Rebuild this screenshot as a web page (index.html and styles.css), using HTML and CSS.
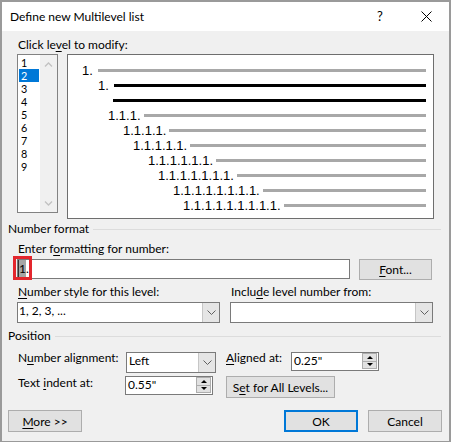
FILE: index.html
```html
<!DOCTYPE html>
<html>
<head>
<meta charset="utf-8">
<link rel="stylesheet" href="styles.css">
</head>
<body>
<div class="dialog">
  <div class="titlebar">
    <span class="title">Define new Multilevel list</span>
    <span class="cap help">?</span>
    <span class="cap close"><svg width="11" height="11" viewBox="0 0 11 11"><path d="M0.5 0.5L10.5 10.5M10.5 0.5L0.5 10.5" stroke="#000" stroke-width="1" fill="none"/></svg></span>
  </div>
  <div class="content">
    <div class="lbl click">Click le<u>v</u>el to modify:</div>
    <div class="top-row">
      <div class="listbox">
        <ul class="items">
          <li>1</li><li class="sel">2</li><li>3</li><li>4</li><li>5</li><li>6</li><li>7</li><li>8</li><li>9</li>
        </ul>
        <div class="vscroll">
          <svg width="9" height="5" viewBox="0 0 9 5"><path d="M1 4.5L4.5 1L8 4.5" stroke="#c2c2c2" stroke-width="1.3" fill="none"/></svg>
          <svg width="9" height="5" viewBox="0 0 9 5"><path d="M1 0.5L4.5 4L8 0.5" stroke="#c2c2c2" stroke-width="1.3" fill="none"/></svg>
        </div>
      </div>
      <div class="preview">
        <div class="prow l1 wide"><span class="num">1.</span><span class="bar"></span></div>
        <div class="prow l2 wide"><span class="num">1.</span><span class="bar dark"></span></div>
        <div class="prow l3"><span class="bar dark"></span></div>
        <div class="prow l4"><span class="num">1.1.1.</span><span class="bar"></span></div>
        <div class="prow l5"><span class="num">1.1.1.1.</span><span class="bar"></span></div>
        <div class="prow l6"><span class="num">1.1.1.1.1.</span><span class="bar"></span></div>
        <div class="prow l7"><span class="num">1.1.1.1.1.1.</span><span class="bar"></span></div>
        <div class="prow l8"><span class="num">1.1.1.1.1.1.1.</span><span class="bar"></span></div>
        <div class="prow l9"><span class="num">1.1.1.1.1.1.1.1.</span><span class="bar"></span></div>
        <div class="prow l10"><span class="num">1.1.1.1.1.1.1.1.1.</span><span class="bar"></span></div>
      </div>
    </div>

    <div class="ghead first"><span>Number format</span><span class="rule"></span></div>
    <div class="fblock">
      <div class="lbl enter">Enter f<u>o</u>rmatting for number:</div>
      <div class="fmt-row">
        <div class="textbox"><span class="seltext">1</span>.</div>
        <div class="btn font"><span><u>F</u>ont...</span></div>
        <div class="redbox"></div>
      </div>
      <div class="two-col">
        <div class="col">
          <div class="lbl"><u>N</u>umber style for this level:</div>
          <div class="combo wide-combo"><span class="val">1, 2, 3, ...</span><span class="arr"><svg width="9" height="5" viewBox="0 0 9 5"><path d="M0.5 0.5L4.5 4.5L8.5 0.5" stroke="#606060" stroke-width="1" fill="none"/></svg></span></div>
        </div>
        <div class="col">
          <div class="lbl">Inclu<u>d</u>e level number from:</div>
          <div class="combo wide-combo"><span class="val"></span><span class="arr"><svg width="9" height="5" viewBox="0 0 9 5"><path d="M0.5 0.5L4.5 4.5L8.5 0.5" stroke="#606060" stroke-width="1" fill="none"/></svg></span></div>
        </div>
      </div>
    </div>

    <div class="ghead second"><span>Position</span><span class="rule"></span></div>
    <div class="prow-a">
      <span class="plbl w108">N<u>u</u>mber alignment:</span>
      <div class="combo small-combo"><span class="val">Left</span><span class="arr"><svg width="9" height="5" viewBox="0 0 9 5"><path d="M0.5 0.5L4.5 4.5L8.5 0.5" stroke="#606060" stroke-width="1" fill="none"/></svg></span></div>
      <span class="plbl aligned"><u>A</u>ligned at:</span>
      <div class="spin"><span class="val">0.25"</span><span class="sb"><span class="half"><span class="tri up"></span></span><span class="half"><span class="tri down"></span></span></span></div>
    </div>
    <div class="prow-b">
      <span class="plbl w107">Text <u>i</u>ndent at:</span>
      <div class="spin"><span class="val">0.55"</span><span class="sb"><span class="half"><span class="tri up"></span></span><span class="half"><span class="tri down"></span></span></span></div>
      <div class="btn setall"><span>S<u>e</u>t for All Levels...</span></div>
    </div>

    <div class="footer">
      <div class="btn fbtn"><span><u>M</u>ore &gt;&gt;</span></div>
      <div class="btn fbtn ok"><span>OK</span></div>
      <div class="btn fbtn cancel"><span>Cancel</span></div>
    </div>
  </div>
</div>
</body>
</html>
```

FILE: styles.css
```css
* { box-sizing: border-box; margin: 0; padding: 0; }
html, body { width: 451px; height: 442px; overflow: hidden; }
body {
  font-family: Lato, "Noto Sans", sans-serif;
  font-size: 12px;
  color: #000;
  background: #f0f0f0;
}
u { text-decoration: underline; text-underline-offset: 2px; }

.dialog {
  width: 451px;
  height: 442px;
  border: 2px solid #9a9a9a;
  border-bottom-width: 1px;
  background: #f0f0f0;
}

.titlebar {
  height: 29px;
  background: #fff;
  display: flex;
}
.title { flex: 1; padding-left: 8px; line-height: 29px; }
.cap { width: 46px; display: flex; align-items: center; justify-content: center; }
.help { font-size: 13px; line-height: 29px; }
.close svg { display: block; }

.content { padding-left: 6px; }

.lbl { line-height: 16px; padding-left: 1px; white-space: nowrap; }
.click { margin: 6px 0 0 10px; padding-left: 0; }

.top-row { display: flex; margin: 1px 0 0 9px; height: 165px; }

.listbox {
  width: 41px;
  height: 159px;
  border: 1px solid #828282;
  background: #fff;
  display: flex;
}
.items { list-style: none; width: 22px; padding-top: 1px; }
.items li {
  margin-left: 1px;
  width: 20px;
  height: 13px;
  padding-left: 2px;
  font-size: 10.8px;
  line-height: 13px;
}
.items li.sel { background: #0078d7; color: #fff; }
.vscroll {
  width: 17px;
  background: #f0f0f0;
  display: flex;
  flex-direction: column;
  justify-content: space-between;
  align-items: center;
  padding: 7px 0 6px 0;
}
.vscroll svg { display: block; }

.preview {
  margin-left: 9px;
  width: 367px;
  height: 165px;
  border: 1px solid #6e6e6e;
  background: #fff;
  padding: 8px 7px 0 0;
}
.prow { display: flex; align-items: center; height: 15px; gap: 3px; }
.prow.wide { gap: 5px; }
.num {
  font-family: "Liberation Sans", Arial, sans-serif;
  font-size: 13px;
  line-height: 15px;
  white-space: nowrap;
}
.bar { flex: 1; height: 3px; background: #a8a8a8; }
.bar.dark { background: #000; }
.l1 { padding-left: 14px; }
.l2 { padding-left: 30px; }
.l3 { padding-left: 45px; }
.l4 { padding-left: 40px; }
.l5 { padding-left: 55px; }
.l6 { padding-left: 65px; }
.l7 { padding-left: 80px; }
.l8 { padding-left: 90px; }
.l9 { padding-left: 105px; }
.l10 { padding-left: 115px; }

.ghead {
  display: flex;
  align-items: center;
  width: 433px;
  line-height: 16px;
  gap: 4px;
}
.ghead .rule { flex: 1; height: 1px; background: #dcdcdc; }
.ghead.first { margin-top: 2px; }
.ghead.second { margin-top: 5px; }

.fblock { margin-left: 9px; }
.enter { margin-top: 4px; }

.fmt-row { display: flex; margin-top: 2px; position: relative; align-items: flex-start; }
.textbox {
  width: 333px;
  height: 20px;
  border: 1px solid #7a7a7a;
  background: #fff;
  line-height: 17px;
  white-space: nowrap;
}
.seltext {
  display: inline-block;
  background: #a5a5a5;
  border-left: 1px solid #333;
  line-height: 17px;
  vertical-align: top;
}
.redbox {
  position: absolute;
  left: -4px;
  top: -3px;
  width: 19px;
  height: 24px;
  border: 3px solid #e3262d;
}

.btn {
  border: 1px solid #adadad;
  background: #e1e1e1;
  display: flex;
  align-items: center;
  justify-content: center;
  white-space: nowrap;
}
.font { margin-left: 9px; width: 73px; height: 21px; }

.two-col { display: flex; gap: 10px; margin-top: 4px; }
.col { width: 203px; }
.col .combo { margin-top: 2px; }

.combo {
  height: 21px;
  border: 1px solid #7a7a7a;
  background: #fff;
  display: flex;
}
.combo .val { flex: 1; padding-left: 1px; line-height: 16px; white-space: nowrap; }
.combo .arr {
  width: 17px;
  background: #e5e5e5;
  border-left: 1px solid #c6c6c6;
  display: flex;
  align-items: center;
  justify-content: center;
}
.combo .arr svg { display: block; }
.wide-combo { width: 203px; }
.small-combo { width: 90px; }
.small-combo .val { padding-left: 2px; }

.prow-a { display: flex; align-items: flex-start; margin: 8px 0 0 10px; }
.prow-b { display: flex; align-items: flex-start; margin: 3px 0 0 10px; }
.plbl { line-height: 11px; white-space: nowrap; }
.prow-b .plbl { padding-top: 1px; }
.w108 { width: 108px; }
.w107 { width: 107px; }
.aligned { margin-left: 10px; width: 65px; }

.spin {
  width: 88px;
  height: 19px;
  border: 1px solid #7a7a7a;
  background: #fff;
  display: flex;
}
.spin .val { flex: 1; padding-left: 2px; line-height: 15px; }
.spin .sb {
  width: 15px;
  height: 16px;
  margin-right: 1px;
  display: flex;
  flex-direction: column;
}
.spin .half {
  flex: 1;
  border: 1px solid #adadad;
  background: #e1e1e1;
  display: flex;
  align-items: center;
  justify-content: center;
}
.spin .half + .half { border-top: none; }
.tri { width: 0; height: 0; border-left: 3px solid transparent; border-right: 3px solid transparent; }
.tri.up { border-bottom: 3px solid #000; }
.tri.down { border-top: 3px solid #000; }

.setall { margin-left: 13px; width: 109px; height: 22px; }

.footer { display: flex; width: 434px; margin-top: 12px; }
.fbtn { width: 74px; height: 22px; }
.ok { margin-left: auto; border: 2px solid #0078d7; }
.cancel { margin-left: 10px; }
```
